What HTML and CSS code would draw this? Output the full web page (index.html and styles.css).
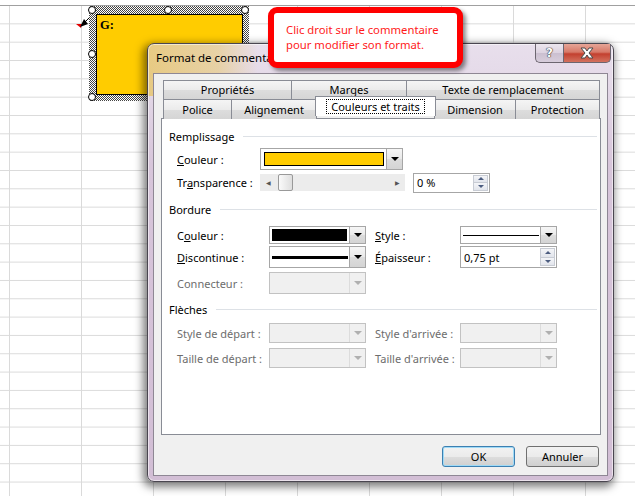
FILE: index.html
```html
<!DOCTYPE html>
<html lang="fr">
<head>
    <meta charset="UTF-8">
    <title>Format de commentaire</title>
    <link rel="stylesheet" href="styles.css">
</head>
<body>
    <div class="sheet"></div>

    <!-- comment selected on the sheet -->
    <svg class="marker" width="20" height="14" viewBox="0 0 20 14">
        <polygon points="2,8 8,8 7,12" fill="#e00000"/>
        <line x1="11" y1="6" x2="16" y2="1" stroke="#000" stroke-width="1"/>
        <polygon points="6,11 10,3 14,8" fill="#000"/>
    </svg>
    <div class="comment">
        <span class="handle h1"></span>
        <span class="handle h2"></span>
        <span class="handle h3"></span>
        <span class="handle h4"></span>
        <span class="handle h5"></span>
        <span class="handle h6"></span>
        <div class="note"><b>G:</b></div>
    </div>

    <div class="dialog">
        <div class="titlebar">
            <span class="title">Format de commentaire</span>
            <div class="caption">
                <span class="cap-help">?</span>
                <span class="cap-close">
                    <svg width="16" height="12" viewBox="0 0 16 12">
                        <path d="M2 1h4l2 3 2-3h4l-4 5 4 5h-4l-2-3-2 3H2l4-5z" fill="#fff" stroke="#4b4b4b" stroke-width="1"/>
                    </svg>
                </span>
            </div>
        </div>

        <div class="client">
            <div class="tabs">
                <div class="tab-row">
                    <div class="tab w-prop">Propriétés</div>
                    <div class="tab w-marg">Marges</div>
                    <div class="tab w-texte">Texte de remplacement</div>
                </div>
                <div class="tab-row">
                    <div class="tab w-pol">Police</div>
                    <div class="tab w-ali">Alignement</div>
                    <div class="tab w-coul active"><span class="focus">Couleurs et traits</span></div>
                    <div class="tab w-dim">Dimension</div>
                    <div class="tab w-prot">Protection</div>
                </div>
            </div>

            <div class="panel">
                <div class="group-head first"><span>Remplissage</span></div>
                <div class="row fill-row r-h22">
                    <label class="lbl fill-lbl"><u>C</u>ouleur :</label>
                    <div class="combo fill-combo">
                        <span class="swatch yellow"></span>
                        <span class="drop"><i></i></span>
                    </div>
                </div>
                <div class="row fill-row r-trans">
                    <label class="lbl fill-lbl">Tr<u>a</u>nsparence :</label>
                    <div class="slider">
                        <span class="arr">&#9664;</span>
                        <span class="thumb"></span>
                        <span class="arr right">&#9654;</span>
                    </div>
                    <div class="spin pct">
                        <span class="val">0 %</span>
                        <span class="spin-btns"><i class="up"></i><i class="down"></i></span>
                    </div>
                </div>

                <div class="group-head g-bord"><span>Bordure</span></div>
                <div class="row r-h18 r-b1">
                    <label class="lbl col1">C<u>o</u>uleur :</label>
                    <div class="combo narrow">
                        <span class="swatch black"></span>
                        <span class="drop"><i></i></span>
                    </div>
                    <label class="lbl col2"><u>S</u>tyle :</label>
                    <div class="combo narrow">
                        <span class="line thin"></span>
                        <span class="drop"><i></i></span>
                    </div>
                </div>
                <div class="row r-h22 r-b2">
                    <label class="lbl col1"><u>D</u>iscontinue :</label>
                    <div class="combo narrow">
                        <span class="line thick"></span>
                        <span class="drop"><i></i></span>
                    </div>
                    <label class="lbl col2"><u>É</u>paisseur :</label>
                    <div class="spin narrow">
                        <span class="val">0,75 pt</span>
                        <span class="spin-btns"><i class="up"></i><i class="down"></i></span>
                    </div>
                </div>
                <div class="row r-h22 r-b3 disabled">
                    <label class="lbl col1">Connecteur :</label>
                    <div class="combo narrow off">
                        <span class="drop"><i></i></span>
                    </div>
                </div>

                <div class="group-head g-fl"><span>Flèches</span></div>
                <div class="row r-h20 r-f1 disabled">
                    <label class="lbl col1">Style de départ :</label>
                    <div class="combo narrow off"><span class="drop"><i></i></span></div>
                    <label class="lbl col2">Style d'arrivée :</label>
                    <div class="combo narrow off"><span class="drop"><i></i></span></div>
                </div>
                <div class="row r-h20 r-f2 disabled">
                    <label class="lbl col1">Taille de départ :</label>
                    <div class="combo narrow off"><span class="drop"><i></i></span></div>
                    <label class="lbl col2">Taille d'arrivée :</label>
                    <div class="combo narrow off"><span class="drop"><i></i></span></div>
                </div>
            </div>

            <div class="buttons">
                <button class="btn default">OK</button>
                <button class="btn">Annuler</button>
            </div>
        </div>
    </div>

    <div class="callout">
        Clic droit sur le commentaire<br>
        pour modifier son format.
    </div>
</body>
</html>
```

FILE: styles.css
```css
body {
    margin: 0;
    width: 635px;
    height: 496px;
    overflow: hidden;
    position: relative;
    background: #fff;
    font-family: "Noto Sans", sans-serif;
    font-size: 11px;
    color: #000;
}

/* spreadsheet grid */
.sheet {
    margin-top: 5px;
    height: 491px;
    border-top: 1px solid #a0a0a0;
    box-sizing: border-box;
    background-image:
        linear-gradient(to right, #dadada 1px, transparent 1px),
        linear-gradient(to bottom, transparent 17.33px, #dadada 17.33px);
    background-size: 72px 100%, 100% 18.33px;
    background-position: 9px 0, 0 0;
}

.marker {
    position: absolute;
    left: 74px;
    top: 16px;
}

.comment {
    position: absolute;
    left: 89px;
    top: 6px;
    padding: 8px 6px 6px 7px;
    background: repeating-conic-gradient(#444 0 25%, #fff 0 50%) 0 0 / 2px 2px;
}

.note {
    width: 141px;
    height: 74px;
    border: 1px solid #000;
    background: #ffcc00;
    font-family: "Liberation Serif", serif;
    font-size: 12.5px;
    line-height: 14px;
    padding: 3px 1px 2px 3px;
}

.handle {
    position: absolute;
    width: 6px;
    height: 6px;
    border: 1px solid #000;
    border-radius: 50%;
    background: #fff;
}
.h1 { left: -1px; top: 0; }
.h2 { left: 75px; top: 0; }
.h3 { left: 152px; top: 0; }
.h4 { left: -1px; top: 44px; }
.h5 { left: -1px; top: 87px; }
.h6 { left: 152px; top: 44px; }

/* dialog window */
.dialog {
    position: absolute;
    left: 147px;
    top: 43px;
    width: 467px;
    height: 439px;
    box-sizing: border-box;
    border: 1px solid #4a4650;
    border-radius: 7px;
    padding: 0 5px 5px 5px;
    display: flex;
    flex-direction: column;
    background:
        linear-gradient(to right, rgba(232, 196, 96, 0.75), rgba(232, 200, 110, 0.55) 70px, rgba(228, 214, 232, 0) 110px) 0 0 / 100% 52px no-repeat,
        linear-gradient(#e8dfec, #e4d9e8 40px, #d7c5da 120px, #d2bed5);
    box-shadow: -2px 3px 9px 2px rgba(0, 0, 0, 0.5), inset 0 0 0 1px rgba(255, 255, 255, 0.55);
}

.titlebar {
    height: 29px;
    flex: none;
    display: flex;
    align-items: flex-start;
}

.title {
    font-size: 11.5px;
    margin: 6px 0 0 3px;
    color: #000;
}

.caption {
    margin-left: auto;
    margin-right: -3px;
    display: flex;
}

.cap-help, .cap-close {
    height: 19px;
    box-sizing: border-box;
    border: 1px solid #6c6670;
    border-top: none;
    display: flex;
    align-items: center;
    justify-content: center;
}

.cap-help {
    width: 28px;
    border-radius: 0 0 0 5px;
    border-right: none;
    background: linear-gradient(#ece6ee, #dcd2e0 50%, #cbbfd0 51%, #d7cddb);
    font-family: "DejaVu Sans", sans-serif;
    font-weight: bold;
    font-size: 12px;
    color: #fff;
    text-shadow: 0 0 1px #333, 0 0 1px #333, 0 0 1px #333;
}

.cap-close {
    width: 48px;
    border-radius: 0 0 5px 0;
    background: linear-gradient(#e6a597, #d77968 45%, #c3402f 55%, #d3725f);
}

.client {
    flex: 1;
    border: 1px solid #8e8794;
    background: #f0f0f0;
    padding: 6px 5px 7px 7px;
    display: flex;
    flex-direction: column;
}

/* tabs */
.tabs {
    padding-left: 2px;
    position: relative;
    z-index: 1;
}

.tab-row {
    display: flex;
}

.tab {
    box-sizing: border-box;
    height: 19px;
    border: 1px solid #898c95;
    border-bottom: none;
    margin-right: -1px;
    background: linear-gradient(#f5f5f5, #ebebeb 50%, #dddddd 51%, #d5d5d5);
    display: flex;
    align-items: center;
    justify-content: center;
    padding-bottom: 1px;
}
.tab-row + .tab-row .tab {
    height: 20px;
}

.tab.active {
    background: #fff;
    height: 23px;
    margin: -3px -2px -1px -1px;
    padding-top: 1px;
    position: relative;
}

.focus {
    border: 1px dotted #000;
    padding: 0 4px;
    line-height: 13px;
}

.w-prop { width: 129px; }
.w-marg { width: 116px; }
.w-texte { width: 194px; }
.w-pol { width: 69px; }
.w-ali { width: 86px; }
.w-coul { width: 121px; }
.w-dim { width: 82px; }
.w-prot { width: 85px; }

.panel {
    box-sizing: border-box;
    width: 440px;
    height: 317px;
    margin-top: -1px;
    border: 1px solid #898c95;
    background: #fff;
    padding-left: 7px;
}

.group-head {
    display: flex;
    align-items: center;
    height: 16px;
    margin-right: 3px;
}
.group-head::after {
    content: "";
    flex: 1;
    height: 1px;
    margin-left: 9px;
    background: #dde1e6;
}
.group-head.first { margin-top: 9px; }
.g-bord { margin-top: 9px; }
.g-fl { margin-top: 7px; }

.row {
    display: flex;
    align-items: center;
    padding-left: 8px;
}
.r-h22 { height: 22px; }
.r-h18 { height: 18px; }
.r-h20 { height: 20px; }
.group-head.first + .row { margin-top: 4px; }
.r-trans { margin-top: 3px; height: 19px; }
.r-b1 { margin-top: 9px; }
.r-b2 { margin-top: 2px; }
.r-b3 { margin-top: 4px; }
.r-f1 { margin-top: 6px; }
.r-f2 { margin-top: 5px; }

.lbl { flex: none; }
.fill-lbl { width: 83px; }
.col1 { width: 92px; }
.col2 { width: 85px; margin-left: 9px; }

.disabled .lbl { color: #6d6d6d; }

/* combos */
.combo, .spin {
    box-sizing: border-box;
    height: 100%;
    border: 1px solid #a6a6a6;
    background: #fff;
    display: flex;
    align-items: stretch;
    flex: none;
}
.fill-combo { width: 143px; }
.narrow { width: 97px; }

.swatch {
    flex: 1;
    margin: 3px 2px 3px 3px;
    border: 1px solid #000;
}
.yellow { background: #ffcc00; }
.black { background: #000; margin: 2px 2px 2px 2px; }

.line {
    flex: 1;
    align-self: center;
    margin: 0 1px 0 2px;
    background: #000;
}
.line.thin { height: 1px; }
.line.thick { height: 3px; }

.drop {
    width: 16px;
    box-sizing: border-box;
    border-left: 1px solid #a6a6a6;
    background: linear-gradient(#f6f6f6, #e9e9e9 50%, #dcdcdc 51%, #d4d4d4);
    display: flex;
    align-items: center;
    justify-content: center;
    margin-left: auto;
}
.drop i {
    width: 0;
    height: 0;
    border-left: 4px solid transparent;
    border-right: 4px solid transparent;
    border-top: 4px solid #000;
}

.combo.off {
    background: #f0f0f0;
    border-color: #c2c2c2;
}
.combo.off .drop {
    background: #f0f0f0;
    border-left-color: #dcdcdc;
}
.combo.off .drop i { border-top-color: #b0b0b0; }

/* slider */
.slider {
    width: 145px;
    height: 17px;
    background: #ececec;
    display: flex;
    align-items: center;
    flex: none;
    position: relative;
}
.arr {
    font-size: 6px;
    color: #555;
    width: 16px;
    text-align: center;
}
.arr.right { margin-left: auto; }
.thumb {
    width: 15px;
    height: 17px;
    box-sizing: border-box;
    margin-left: 2px;
    border: 1px solid #999;
    border-radius: 2px;
    background: linear-gradient(to right, #fafafa, #dedede);
}

/* spin boxes */
.spin .val {
    flex: 1;
    padding-left: 3px;
    display: flex;
    align-items: center;
}
.pct {
    width: 77px;
    height: 20px;
    margin-left: 8px;
}
.spin-btns {
    width: 15px;
    display: flex;
    flex-direction: column;
    margin: 1px 1px 1px 0;
}
.spin-btns i {
    flex: 1;
    border: 1px solid #c8ccd4;
    background: linear-gradient(#f4f5f8, #e2e5ec);
    display: flex;
    align-items: center;
    justify-content: center;
}
.spin-btns i::before {
    content: "";
    border-left: 3px solid transparent;
    border-right: 3px solid transparent;
}
.spin-btns .up::before { border-bottom: 3px solid #4c5d80; }
.spin-btns .down::before { border-top: 3px solid #4c5d80; }
.spin-btns .down { border-top: none; }

/* bottom buttons */
.buttons {
    margin-top: 11px;
    display: flex;
    justify-content: flex-end;
    gap: 11px;
    padding-right: 3px;
}
.btn {
    width: 73px;
    height: 21px;
    font-family: "Noto Sans", sans-serif;
    font-size: 11px;
    border: 1px solid #707070;
    border-radius: 3px;
    background: linear-gradient(#f2f2f2, #ebebeb 50%, #dddddd 51%, #cfcfcf);
    padding: 0;
    color: #000;
}
.btn.default {
    border-color: #3c7fb1;
    box-shadow: inset 0 0 0 1px #9fdaf6;
}

/* red note over everything */
.callout {
    position: absolute;
    left: 268px;
    top: 7px;
    width: 195px;
    height: 61px;
    box-sizing: border-box;
    border: 6px solid #ff0000;
    border-radius: 9px;
    background: #fff;
    color: #ff1a1a;
    font-size: 11.3px;
    line-height: 15px;
    padding: 9px 0 0 12px;
    box-shadow: 3px 3px 4px rgba(0, 0, 0, 0.45);
}
```
